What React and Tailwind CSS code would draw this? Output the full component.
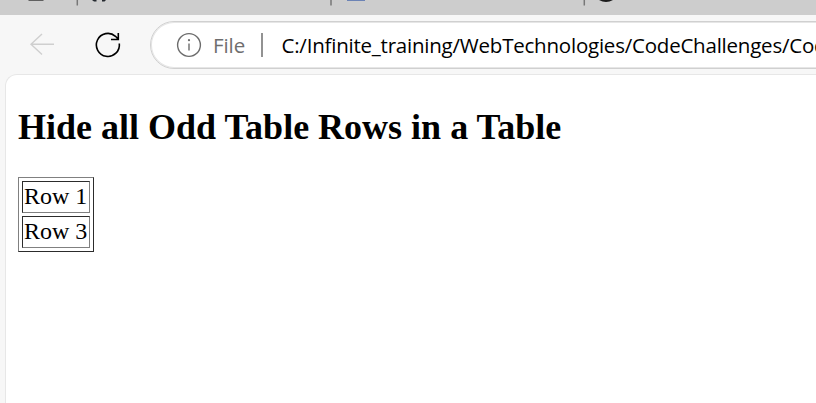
function TabStrip() {
  return (
    <div className="h-[15px] bg-[#cdcdcd]">
      <svg width="816" height="15" className="block">
        <path d="M28 0H44L43 1H29Z" fill="#606060" />
        <path d="M77.3 0V5.5M331 0V5.5M584.3 0V5.5" stroke="#777" strokeWidth="1.5" />
        <path d="M92 0H96.5V1.5H94ZM102 0H106L104.5 1.5H102Z" fill="#24292f" />
        <path d="M347 0H365V1H347Z" fill="#6c83b5" />
        <path d="M599 0H613Q606 4 599 0Z" fill="#1c1c1c" />
      </svg>
    </div>
  );
}

function Toolbar() {
  return (
    <div className="flex h-[59px] items-start pt-[6px]">
      <svg width="150" height="48" className="shrink-0" fill="none">
        <path d="M54 23.3H31M42 13L31 23.3L42 33.5" stroke="#cfcfcf" strokeWidth="1.4" />
        <path d="M119.3 22.5A11.5 11.5 0 1 1 115.5 15.3L118.3 18.3M118.3 12V18.5H111" stroke="#000" strokeWidth="1.6" />
      </svg>
      <div className="flex h-12 w-[700px] shrink-0 items-center rounded-full border border-[#d0d0d0] bg-white pl-[25px] font-['Open_Sans','Noto_Sans',sans-serif] text-[20.5px] whitespace-nowrap shadow-[inset_0_0_0_1px_#e6e6e6]">
        <svg width="26" height="26" className="shrink-0" fill="none">
          <circle cx="13" cy="13" r="11.4" stroke="#6c6c6c" strokeWidth="1.4" />
          <path d="M13 11.5V18.5" stroke="#6c6c6c" strokeWidth="1.4" />
          <circle cx="13" cy="8.2" r="1.1" fill="#6c6c6c" />
        </svg>
        <span className="ml-[11px] w-[48px] shrink-0 tracking-[-0.1px] text-[#6e6e6e]">File</span>
        <span className="h-6 w-[2px] shrink-0 bg-[#929292]" />
        <span className="ml-[18.5px] shrink-0 tracking-[-0.22px] text-black">C:/Infinite_training/WebTechnologies/CodeChallenges/Cod</span>
      </div>
    </div>
  );
}

const rows = ["Row 1", "Row 3"];

export default function App() {
  return (
    <div className="flex h-[403px] w-[816px] flex-col overflow-hidden bg-[#f7f7f7]">
      <TabStrip />
      <Toolbar />
      <main className="ml-[5px] flex-1 rounded-tl-[12px] border-t border-l border-[#e7e7e7] bg-white pl-[12px] font-['Liberation_Serif',serif] text-black">
        <h2 className="mt-[32px] text-[36px] leading-[41px] font-bold whitespace-nowrap">Hide all Odd Table Rows in a Table</h2>
        <div className="mt-[29px] flex w-[76px] flex-col gap-[3px] border border-t-[#808080] border-r-[#2c2c2c] border-b-[#2c2c2c] border-l-[#808080] p-[3px]">
          {rows.map((row) => (
            <div key={row} className="h-8 border border-t-[#2c2c2c] border-r-[#808080] border-b-[#808080] border-l-[#2c2c2c] pl-px text-[24px] leading-[28px] whitespace-nowrap">
              {row}
            </div>
          ))}
        </div>
      </main>
    </div>
  );
}
